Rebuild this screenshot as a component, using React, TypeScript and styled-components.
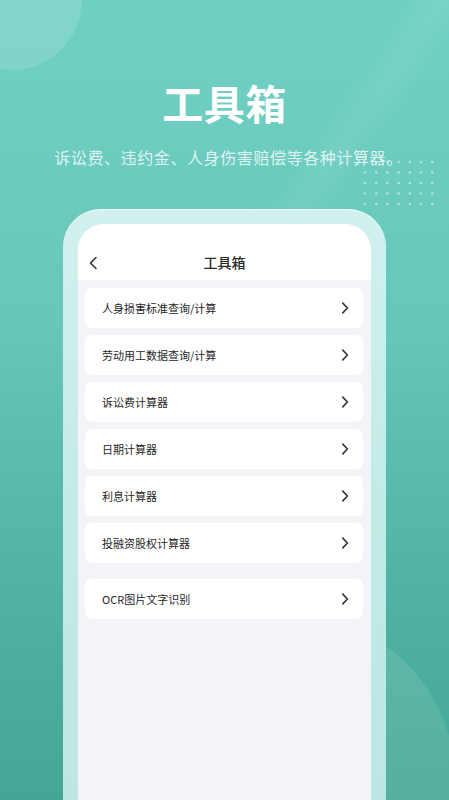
import React from "react";
import styled, { createGlobalStyle } from "styled-components";

const TOOLS = [
  "人身损害标准查询/计算",
  "劳动用工数据查询/计算",
  "诉讼费计算器",
  "日期计算器",
  "利息计算器",
  "投融资股权计算器",
];

const EXTRA_TOOLS = ["OCR图片文字识别"];

const GlobalStyle = createGlobalStyle`
  html, body {
    margin: 0;
    padding: 0;
  }
  body {
    font-family: "Noto Sans CJK SC", "Noto Sans", sans-serif;
  }
`;

function Chevron({ left }: { left?: boolean }) {
  return left ? (
    <svg width="10" height="14" viewBox="0 0 10 14" fill="none">
      <path d="M8 1.5 2.5 7 8 12.5" stroke="#333" strokeWidth="1.6" strokeLinecap="round" strokeLinejoin="round" />
    </svg>
  ) : (
    <svg width="8" height="12" viewBox="0 0 8 12" fill="none">
      <path d="M1.8 1.2 6.4 6 1.8 10.8" stroke="#3a3a3a" strokeWidth="1.7" strokeLinecap="round" strokeLinejoin="round" />
    </svg>
  );
}

function DotGrid() {
  const dots = [];
  for (let r = 0; r < 5; r++) {
    for (let c = 0; c < 7; c++) {
      dots.push(<circle key={`${r}-${c}`} cx={3 + c * 11.2} cy={3 + r * 10.5} r="1.3" fill="rgba(255,255,255,0.5)" />);
    }
  }
  return (
    <Dots width="80" height="50" viewBox="0 0 80 50">
      {dots}
    </Dots>
  );
}

function ToolRow({ label }: { label: string }) {
  return (
    <Row>
      <RowLabel>{label}</RowLabel>
      <Chevron />
    </Row>
  );
}

export default function App() {
  return (
    <Page>
      <GlobalStyle />
      <CircleTop />
      <CircleBottom />
      <Streak />
      <DotGrid />
      <Title>工具箱</Title>
      <Subtitle>诉讼费、违约金、人身伤害赔偿等各种计算器。</Subtitle>
      <Frame>
        <Screen>
          <Header>
            <BackButton>
              <Chevron left />
            </BackButton>
            <HeaderTitle>工具箱</HeaderTitle>
          </Header>
          <Content>
            <Group>
              {TOOLS.map((t) => (
                <ToolRow key={t} label={t} />
              ))}
            </Group>
            <Group $spaced>
              {EXTRA_TOOLS.map((t) => (
                <ToolRow key={t} label={t} />
              ))}
            </Group>
          </Content>
        </Screen>
      </Frame>
    </Page>
  );
}

const Page = styled.div`
  position: relative;
  width: 449px;
  height: 800px;
  overflow: hidden;
  display: flex;
  flex-direction: column;
  align-items: center;
  background: linear-gradient(180deg, #70d0c4 0%, #66c7ba 40%, #4fb2a2 75%, #45a695 100%);
`;

const CircleTop = styled.div`
  position: absolute;
  left: -58px;
  top: -70px;
  width: 140px;
  height: 140px;
  border-radius: 50%;
  background: rgba(255, 255, 255, 0.13);
`;

const CircleBottom = styled.div`
  position: absolute;
  left: 125px;
  top: 615px;
  width: 330px;
  height: 330px;
  border-radius: 50%;
  background: rgba(255, 255, 255, 0.1);
`;

const Streak = styled.div`
  position: absolute;
  left: 330px;
  top: -40px;
  width: 60px;
  height: 320px;
  transform: rotate(35deg);
  background: linear-gradient(90deg, rgba(255, 255, 255, 0), rgba(255, 255, 255, 0.07), rgba(255, 255, 255, 0));
`;

const Dots = styled.svg`
  position: absolute;
  left: 362px;
  top: 159px;
`;

const Title = styled.h1`
  position: relative;
  margin: 78px 0 0;
  font-size: 41px;
  line-height: 48px;
  font-weight: 700;
  color: #ffffff;
  letter-spacing: 0.5px;
`;

const Subtitle = styled.p`
  position: relative;
  margin: 21px 0 0 8px;
  font-size: 16px;
  line-height: 20px;
  letter-spacing: 0.6px;
  color: rgba(255, 255, 255, 0.8);
  white-space: nowrap;
`;

const Frame = styled.div`
  position: relative;
  margin-top: 42px;
  width: 323px;
  flex: 1;
  box-sizing: border-box;
  padding: 15px 15px 0;
  border-radius: 38px 38px 0 0;
  background: linear-gradient(180deg, #d2f1ee 0%, #c2ebe6 50%, #bce7e2 100%);
  box-shadow: inset 0 1px 0 rgba(255, 255, 255, 0.7);
  display: flex;
`;

const Screen = styled.div`
  flex: 1;
  display: flex;
  flex-direction: column;
  border-radius: 26px 26px 0 0;
  overflow: hidden;
  background: #f3f4f7;
`;

const Header = styled.div`
  position: relative;
  height: 56px;
  box-sizing: border-box;
  padding-top: 20px;
  background: #ffffff;
  display: flex;
  justify-content: center;
`;

const BackButton = styled.div`
  position: absolute;
  left: 10px;
  top: 32px;
  display: flex;
`;

const HeaderTitle = styled.div`
  height: 36px;
  line-height: 36px;
  font-size: 14px;
  font-weight: 500;
  color: #2a2a2a;
`;

const Content = styled.div`
  padding: 8px 8px 0 7px;
  display: flex;
  flex-direction: column;
`;

const Group = styled.div<{ $spaced?: boolean }>`
  display: flex;
  flex-direction: column;
  gap: 7px;
  margin-top: ${(p) => (p.$spaced ? "16px" : "0")};
`;

const Row = styled.div`
  height: 40px;
  box-sizing: border-box;
  padding: 0 14px 0 17px;
  background: #ffffff;
  border-radius: 7px;
  display: flex;
  align-items: center;
  justify-content: space-between;
`;

const RowLabel = styled.span`
  font-size: 11px;
  font-weight: 400;
  color: #262626;
`;
